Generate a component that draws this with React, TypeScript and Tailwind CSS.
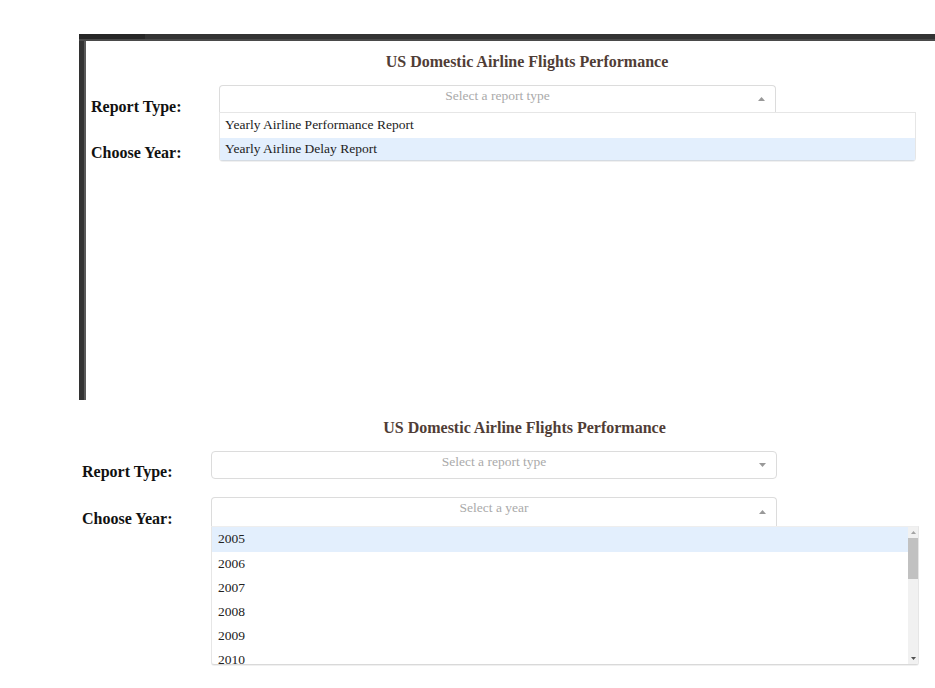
import React from 'react';

const TITLE = 'US Domestic Airline Flights Performance';

const Caret = ({ up }: { up?: boolean }) => (
  <svg width="7" height="4" viewBox="0 0 7 4" className="fill-[#999]">
    <path d={up ? 'M0 4 L3.5 0 L7 4 Z' : 'M0 0 L7 0 L3.5 4 Z'} />
  </svg>
);

const SelectHead = ({ text, open, className }: { text: string; open?: boolean; className: string }) => (
  <div
    className={
      'relative flex items-start justify-center border border-[#dcdcdc] bg-white ' +
      (open ? 'rounded-t-[4px] border-b-0 ' : 'rounded-[4px] ') +
      className
    }
  >
    <span className="pt-[2px] text-[13.5px] leading-[16px] text-[#aaa]">{text}</span>
    <span className="absolute right-[10px] top-0 bottom-0 flex items-center">
      <Caret up={open} />
    </span>
  </div>
);

export default function App() {
  const years = ['2005', '2006', '2007', '2008', '2009', '2010'];

  return (
    <div className="w-[935px] h-[688px] overflow-hidden bg-white font-['Liberation_Serif','Times_New_Roman',serif]">
      {/* Top capture: framed, report type menu open */}
      <div className="h-[34px]" />
      <div className="ml-[79px] h-[366px] flex flex-col">
        <div className="h-[7px] flex flex-col shrink-0">
          <div className="h-[5px] flex">
            <div className="w-[66px] bg-[#262626]" />
            <div className="flex-1 bg-[#333]" />
          </div>
          <div className="h-[2px] bg-[#4a4a4a]" />
        </div>
        <div className="flex flex-1">
          <div className="w-[5px] bg-[#333]" />
          <div className="w-[2px] bg-[#595959]" />
          <div className="flex-1 pt-[11px]">
            <h1 className="pl-[33px] text-center text-[16px] leading-[20px] font-bold text-[#503D36]">{TITLE}</h1>
            <div className="pl-[5px] mt-[13px]">
              <div className="flex items-start">
                <div className="w-[128px] mt-[12px] text-[16px] leading-[20px] font-bold text-[#111]">Report Type:</div>
                <div className="relative">
                  <SelectHead text="Select a report type" open className="w-[557px] h-[27px]" />
                  <div className="absolute left-0 top-full z-10 w-[697px] border border-[#e6e6e6] border-b-[#d5dbe2] rounded-b-[4px] bg-white shadow-[0_1px_0_rgba(0,0,0,0.06)]">
                    <div className="h-[25px] pl-[5px] flex items-center text-[13.5px] text-[#222]">Yearly Airline Performance Report</div>
                    <div className="h-[22px] pl-[5px] flex items-center bg-[#e3effd] text-[13.5px] text-[#222]">Yearly Airline Delay Report</div>
                  </div>
                </div>
              </div>
              <div className="flex items-start mt-[14px]">
                <div className="w-[128px] mt-[12px] text-[16px] leading-[20px] font-bold text-[#111]">Choose Year:</div>
                <SelectHead text="Select a year" className="w-[557px] h-[27px]" />
              </div>
            </div>
          </div>
        </div>
      </div>

      {/* Bottom capture: year menu open */}
      <div className="pt-[18px]">
        <h1 className="pl-[114px] text-center text-[16px] leading-[20px] font-bold text-[#503D36]">{TITLE}</h1>
        <div className="pl-[82px] mt-[13px]">
          <div className="flex items-start">
            <div className="w-[129px] mt-[11px] text-[16px] leading-[20px] font-bold text-[#111]">Report Type:</div>
            <SelectHead text="Select a report type" className="w-[566px] h-[28px]" />
          </div>
          <div className="flex items-start mt-[15px]">
            <div className="w-[129px] mt-[12px] text-[16px] leading-[20px] font-bold text-[#111]">Choose Year:</div>
            <div className="relative">
              <SelectHead text="Select a year" open className="w-[566px] h-[29px]" />
              <div className="absolute left-0 top-full z-10 w-[708px] h-[139px] flex overflow-hidden border border-[#e6e6e6] border-t-[#eeeeee] border-b-[#d9d9d9] rounded-b-[3px] bg-white shadow-[0_1px_0_rgba(0,0,0,0.06)]">
                <div className="flex-1 overflow-hidden">
                  {years.map((y, i) => (
                    <div
                      key={y}
                      className={
                        'pl-[6px] flex items-center text-[13.5px] text-[#222] ' +
                        (i === 0 ? 'h-[25px] bg-[#e3effd]' : 'h-[24px]')
                      }
                    >
                      {y}
                    </div>
                  ))}
                </div>
                <div className="w-[10px] bg-[#f1f1f1] flex flex-col items-center">
                  <div className="h-[11px] flex items-center">
                    <svg width="5" height="3" viewBox="0 0 5 3" className="fill-[#a3a3a3]">
                      <path d="M0 3 L2.5 0 L5 3 Z" />
                    </svg>
                  </div>
                  <div className="w-[10px] h-[41px] bg-[#c1c1c1]" />
                  <div className="flex-1" />
                  <div className="h-[12px] flex items-center">
                    <svg width="5" height="3" viewBox="0 0 5 3" className="fill-[#505050]">
                      <path d="M0 0 L5 0 L2.5 3 Z" />
                    </svg>
                  </div>
                </div>
              </div>
            </div>
          </div>
        </div>
      </div>
    </div>
  );
}
